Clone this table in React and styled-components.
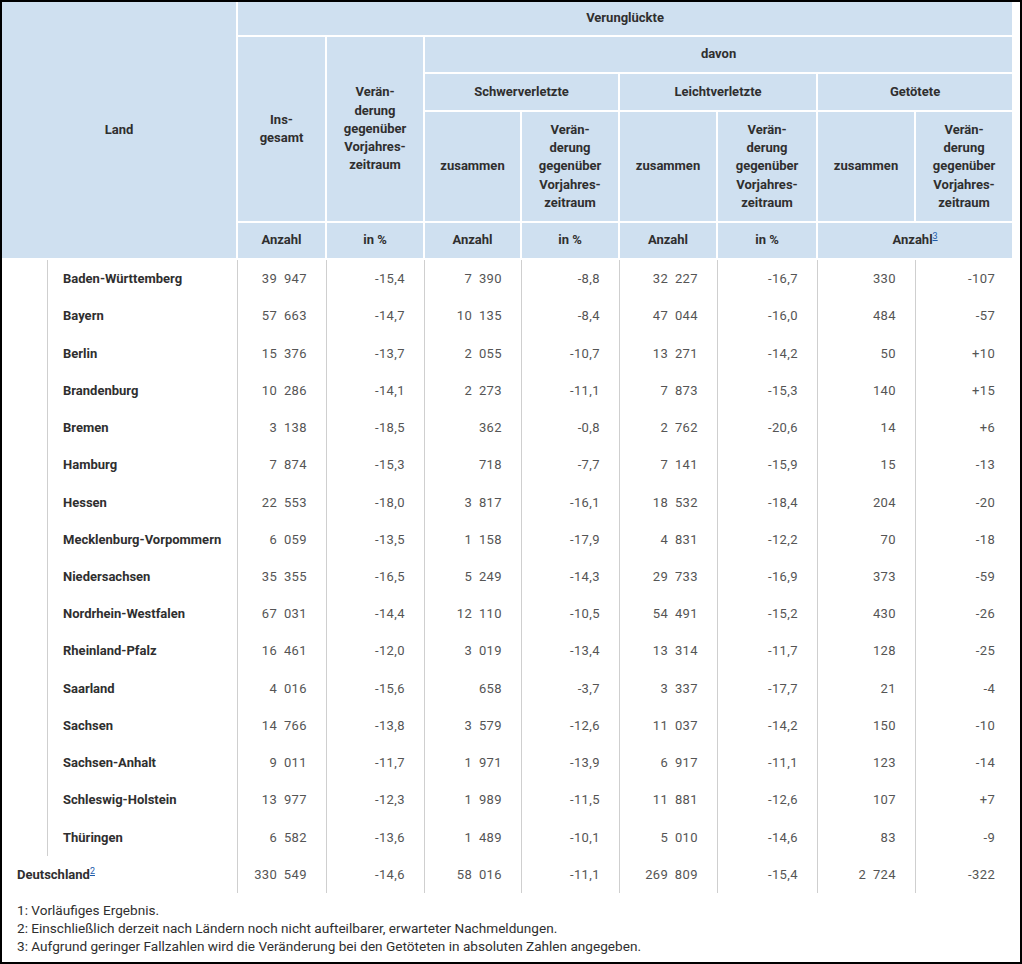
import styled, { createGlobalStyle } from 'styled-components';

const GlobalStyle = createGlobalStyle`
  html, body {
    margin: 0;
    padding: 0;
    background: #ffffff;
  }
  * {
    box-sizing: border-box;
  }
`;

const Frame = styled.div`
  width: 1022px;
  height: 964px;
  border: 2px solid #000000;
  background: #ffffff;
  font-family: Roboto, 'Noto Sans', sans-serif;
  color: #2f2f2f;
  overflow: hidden;
`;

const Table = styled.table`
  width: 1012px;
  table-layout: fixed;
  border-collapse: separate;
  border-spacing: 0;
`;

const HeadRow = styled.tr`
  height: ${(props) => props.$h}px;
`;

const Th = styled.th`
  background: #cfe0f0;
  border-right: 2px solid #ffffff;
  border-bottom: 2px solid #ffffff;
  padding: 0 6px;
  font-size: 13px;
  font-weight: 700;
  line-height: 18.3px;
  text-align: center;
  vertical-align: middle;
  color: #2f2f2f;
`;

const BodyRow = styled.tr`
  height: 37.24px;
`;

const LandCell = styled.td`
  padding: 0 0 0 ${(props) => (props.$indent ? 61 : 15)}px;
  border-right: 1px solid #cfcfcf;
  font-size: 13px;
  font-weight: 700;
  color: #2f2f2f;
  white-space: nowrap;
  background: ${(props) =>
    props.$indent
      ? 'linear-gradient(#cfcfcf, #cfcfcf) no-repeat 45px 0 / 1px 100%'
      : 'none'};
`;

const NumCell = styled.td`
  padding: 0 19px 0 0;
  border-right: ${(props) => (props.$last ? 'none' : '1px solid #cfcfcf')};
  text-align: right;
  font-size: 13px;
  color: #555555;
  font-variant-numeric: tabular-nums;
  letter-spacing: 0.4px;
  word-spacing: 3px;
  white-space: nowrap;
`;

const Note = styled.sup`
  font-size: 9px;
  line-height: 0;
  vertical-align: 5px;
  font-weight: 400;

  a {
    color: #1c5bab;
    text-decoration: underline;
  }
`;

const Footnotes = styled.div`
  padding: 8px 0 0 15px;
  font-size: 13.6px;
  line-height: 18px;
  color: #2f2f2f;
`;

const widths = [236, 89, 98, 97, 98, 98, 100, 98, 98];

const change = (
  <>
    Verän-
    <br />
    derung
    <br />
    gegenüber
    <br />
    Vorjahres-
    <br />
    zeitraum
  </>
);

const rows = [
  ['Baden-Württemberg', '39 947', '-15,4', '7 390', '-8,8', '32 227', '-16,7', '330', '-107'],
  ['Bayern', '57 663', '-14,7', '10 135', '-8,4', '47 044', '-16,0', '484', '-57'],
  ['Berlin', '15 376', '-13,7', '2 055', '-10,7', '13 271', '-14,2', '50', '+10'],
  ['Brandenburg', '10 286', '-14,1', '2 273', '-11,1', '7 873', '-15,3', '140', '+15'],
  ['Bremen', '3 138', '-18,5', '362', '-0,8', '2 762', '-20,6', '14', '+6'],
  ['Hamburg', '7 874', '-15,3', '718', '-7,7', '7 141', '-15,9', '15', '-13'],
  ['Hessen', '22 553', '-18,0', '3 817', '-16,1', '18 532', '-18,4', '204', '-20'],
  ['Mecklenburg-Vorpommern', '6 059', '-13,5', '1 158', '-17,9', '4 831', '-12,2', '70', '-18'],
  ['Niedersachsen', '35 355', '-16,5', '5 249', '-14,3', '29 733', '-16,9', '373', '-59'],
  ['Nordrhein-Westfalen', '67 031', '-14,4', '12 110', '-10,5', '54 491', '-15,2', '430', '-26'],
  ['Rheinland-Pfalz', '16 461', '-12,0', '3 019', '-13,4', '13 314', '-11,7', '128', '-25'],
  ['Saarland', '4 016', '-15,6', '658', '-3,7', '3 337', '-17,7', '21', '-4'],
  ['Sachsen', '14 766', '-13,8', '3 579', '-12,6', '11 037', '-14,2', '150', '-10'],
  ['Sachsen-Anhalt', '9 011', '-11,7', '1 971', '-13,9', '6 917', '-11,1', '123', '-14'],
  ['Schleswig-Holstein', '13 977', '-12,3', '1 989', '-11,5', '11 881', '-12,6', '107', '+7'],
  ['Thüringen', '6 582', '-13,6', '1 489', '-10,1', '5 010', '-14,6', '83', '-9'],
];

const total = ['330 549', '-14,6', '58 016', '-11,1', '269 809', '-15,4', '2 724', '-322'];

function Values({ values }) {
  return values.map((v, i) => (
    <NumCell key={i} $last={i === values.length - 1}>
      {v}
    </NumCell>
  ));
}

export default function App() {
  return (
    <>
      <GlobalStyle />
      <Frame>
        <Table>
          <colgroup>
            {widths.map((w, i) => (
              <col key={i} style={{ width: w }} />
            ))}
          </colgroup>
          <thead>
            <HeadRow $h={35}>
              <Th rowSpan={5}>Land</Th>
              <Th colSpan={8}>Verunglückte</Th>
            </HeadRow>
            <HeadRow $h={37}>
              <Th rowSpan={3}>
                Ins-
                <br />
                gesamt
              </Th>
              <Th rowSpan={3}>{change}</Th>
              <Th colSpan={6}>davon</Th>
            </HeadRow>
            <HeadRow $h={38}>
              <Th colSpan={2}>Schwerverletzte</Th>
              <Th colSpan={2}>Leichtverletzte</Th>
              <Th colSpan={2}>Getötete</Th>
            </HeadRow>
            <HeadRow $h={111}>
              <Th>zusammen</Th>
              <Th>{change}</Th>
              <Th>zusammen</Th>
              <Th>{change}</Th>
              <Th>zusammen</Th>
              <Th>{change}</Th>
            </HeadRow>
            <HeadRow $h={37}>
              <Th>Anzahl</Th>
              <Th>in %</Th>
              <Th>Anzahl</Th>
              <Th>in %</Th>
              <Th>Anzahl</Th>
              <Th>in %</Th>
              <Th colSpan={2}>
                Anzahl
                <Note>
                  <a href='#fn3'>3</a>
                </Note>
              </Th>
            </HeadRow>
          </thead>
          <tbody>
            {rows.map(([land, ...values]) => (
              <BodyRow key={land}>
                <LandCell $indent>{land}</LandCell>
                <Values values={values} />
              </BodyRow>
            ))}
            <BodyRow>
              <LandCell>
                Deutschland
                <Note>
                  <a href='#fn2'>2</a>
                </Note>
              </LandCell>
              <Values values={total} />
            </BodyRow>
          </tbody>
        </Table>
        <Footnotes>
          <div>1: Vorläufiges Ergebnis.</div>
          <div id='fn2'>
            2: Einschließlich derzeit nach Ländern noch nicht aufteilbarer, erwarteter Nachmeldungen.
          </div>
          <div id='fn3'>
            3: Aufgrund geringer Fallzahlen wird die Veränderung bei den Getöteten in absoluten Zahlen angegeben.
          </div>
        </Footnotes>
      </Frame>
    </>
  );
}
